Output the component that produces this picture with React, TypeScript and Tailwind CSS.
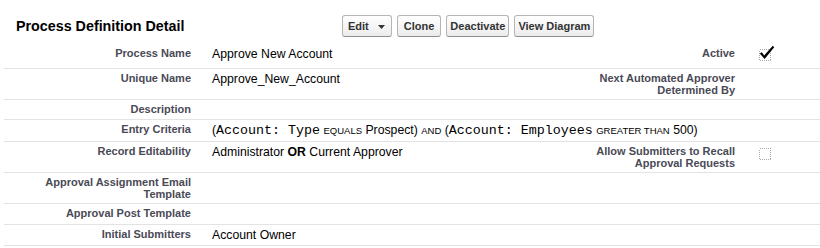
import React from "react";

const Checkbox = ({ checked }: { checked: boolean }) => (
  <svg width="21" height="16" viewBox="0 0 21 16" className="block">
    <rect
      x="2.5"
      y="4.5"
      width="11"
      height="11"
      fill="none"
      stroke="#a8a8a8"
      strokeWidth="1"
      strokeDasharray="1 1"
      shapeRendering="crispEdges"
    />
    {checked && (
      <polygon
        points="2.8,8.6 4.8,7.2 7.2,10.4 15.8,0.8 17.2,2.2 7.6,14"
        fill="#000"
      />
    )}
  </svg>
);

type RowProps = {
  label: React.ReactNode;
  value?: React.ReactNode;
  label2?: React.ReactNode;
  value2?: React.ReactNode;
  span?: boolean;
  h: string;
  v2pt?: string;
};

const labelCls =
  "w-[197px] shrink-0 pl-[2px] pr-[10px] pt-[3px] text-right text-[11px] leading-[12px] font-bold text-[#4a4a56]";

const Row = ({ label, value, label2, value2, span, h, v2pt }: RowProps) => (
  <div className={`flex border-b border-[#e3e3e3] ${h}`}>
    <div className={labelCls}>{label}</div>
    {span ? (
      <div className="flex-1 pl-[11px] pt-[3px] text-[12.25px] leading-[14px] text-black whitespace-nowrap">
        {value}
      </div>
    ) : (
      <>
        <div className="w-[347px] shrink-0 pl-[11px] pr-[10px] pt-[3px] text-[12.25px] leading-[14px] text-black">
          {value}
        </div>
        <div className={labelCls}>{label2}</div>
        <div className={`flex-1 pl-[12px] ${v2pt ?? ""}`}>{value2}</div>
      </>
    )}
  </div>
);

const Mono = ({ children }: { children: React.ReactNode }) => (
  <span className="font-['Liberation_Mono',monospace] text-[13.33px]">{children}</span>
);

const Small = ({ children }: { children: React.ReactNode }) => (
  <span className="text-[9.5px]">{children}</span>
);

const btn =
  "h-[22px] rounded-[3px] border border-[#b5b5b5] border-b-[#8f8f8f] bg-linear-to-b from-white to-[#ececec] text-[11px] leading-[12px] font-bold text-[#333] py-[4px]";

export default function App() {
  return (
    <div className="w-[820px] h-[248px] bg-white font-['Liberation_Sans',Arial,sans-serif] overflow-hidden">
      <div className="flex items-center h-[44px] pb-[7px] pt-[15px]">
        <div className="w-[342px] shrink-0 pl-[16px]">
          <h2 className="text-[14.3px] leading-[17px] font-bold text-black">
            Process Definition Detail
          </h2>
        </div>
        <div className="flex items-center gap-[5px]">
          <button className={`${btn} flex items-center pl-[5px] pr-[6px]`}>
            <span>Edit</span>
            <svg width="7" height="4" viewBox="0 0 7 4" className="ml-[9px] mt-[1px]">
              <polygon points="0,0 7,0 3.5,4" fill="#333" />
            </svg>
          </button>
          <button className={`${btn} px-[6px]`}>Clone</button>
          <button className={`${btn} px-[3px]`}>Deactivate</button>
          <button className={`${btn} px-[3px]`}>View Diagram</button>
        </div>
      </div>
      <div className="ml-[4px]">
        <Row
          h="h-[25px]"
          label="Process Name"
          value="Approve New Account"
          label2="Active"
          value2={<Checkbox checked />}
          v2pt="pt-[1px]"
        />
        <Row
          h="h-[31px]"
          label="Unique Name"
          value="Approve_New_Account"
          label2="Next Automated Approver Determined By"
        />
        <Row h="h-[20px]" label="Description" />
        <Row
          h="h-[22px]"
          label="Entry Criteria"
          span
          value={
            <>
              (<Mono>Account: Type</Mono> <Small>EQUALS</Small> Prospect){" "}
              <Small>AND</Small> (<Mono>Account: Employees</Mono>{" "}
              <Small>GREATER THAN</Small> 500)
            </>
          }
        />
        <Row
          h="h-[31px]"
          label="Record Editability"
          value={
            <>
              Administrator <b>OR</b> Current Approver
            </>
          }
          label2="Allow Submitters to Recall Approval Requests"
          value2={<Checkbox checked={false} />}
          v2pt="pt-[2px]"
        />
        <Row h="h-[31px]" label="Approval Assignment Email Template" />
        <Row h="h-[21px]" label="Approval Post Template" />
        <Row h="h-[21px]" label="Initial Submitters" value="Account Owner" />
      </div>
    </div>
  );
}
